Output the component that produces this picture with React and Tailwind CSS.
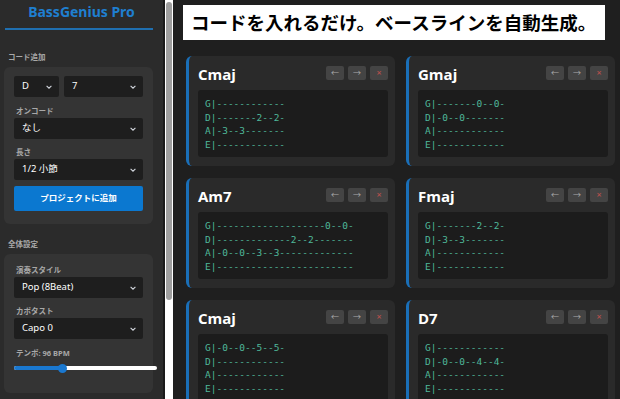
import React from 'react';

const chords = [
  { name: 'Cmaj', tab: ['G|------------', 'D|-------2--2-', 'A|-3--3-------', 'E|------------'] },
  { name: 'Gmaj', tab: ['G|-------0--0-', 'D|-0--0-------', 'A|------------', 'E|------------'] },
  { name: 'Am7', tab: ['G|-------------------0--0-', 'D|-------------2--2-------', 'A|-0--0--3--3-------------', 'E|------------------------'] },
  { name: 'Fmaj', tab: ['G|-------2--2-', 'D|-3--3-------', 'A|------------', 'E|------------'] },
  { name: 'Cmaj', tab: ['G|-0--0--5--5-', 'D|------------', 'A|------------', 'E|------------'] },
  { name: 'D7', tab: ['G|------------', 'D|-0--0--4--4-', 'A|------------', 'E|------------'] },
];

const jp = { fontFamily: '"Noto Sans", "Noto Sans CJK JP", sans-serif' };

function Chevron() {
  return (
    <svg width="8" height="8" viewBox="0 0 10 10" className="text-gray-300">
      <path d="M2 3.5 L5 6.5 L8 3.5" fill="none" stroke="currentColor" strokeWidth="1.4" />
    </svg>
  );
}

function Select({ value, className = '' }) {
  return (
    <div className={`flex items-center justify-between h-[21px] bg-[#1e1e1e] rounded-[2px] pl-2 pr-1.5 text-[9.5px] text-white ${className}`}>
      <span>{value}</span>
      <Chevron />
    </div>
  );
}

function Label({ children, className = '' }) {
  return <div className={`text-[7.5px] leading-[11px] font-bold text-[#a8a8a8] ${className}`}>{children}</div>;
}

function ChordCard({ chord }) {
  return (
    <div className="bg-[#2a2a2a] rounded-md border-l-[3px] border-[#1a6fb8] h-[110px] pl-[9px] pr-[7px] pt-[8px] flex flex-col">
      <div className="flex items-start justify-between">
        <div className="text-white font-bold text-[15px] leading-none mt-[3px]" style={{ fontFamily: '"Open Sans", sans-serif' }}>{chord.name}</div>
        <div className="flex gap-[4px] pt-[2px]">
          <div className="w-[18px] h-[14px] rounded-[2px] bg-[#444444] text-[#aaaaaa] text-[8px] flex items-center justify-center">←</div>
          <div className="w-[18px] h-[14px] rounded-[2px] bg-[#444444] text-[#aaaaaa] text-[8px] flex items-center justify-center">→</div>
          <div className="w-[18px] h-[14px] rounded-[2px] bg-[#444444] text-[#c0504d] text-[9px] flex items-center justify-center">×</div>
        </div>
      </div>
      <div className="mt-[8px] bg-[#1c1c1c] rounded-[3px] h-[67px] pl-[7px] pt-[7px]">
        {chord.tab.map((line, i) => (
          <div key={i} className="text-[9.5px] leading-[13.5px] text-[#4fb89a] whitespace-pre" style={{ fontFamily: '"DejaVu Sans Mono", monospace' }}>{line}</div>
        ))}
      </div>
    </div>
  );
}

export default function App() {
  return (
    <div className="flex h-[399px] w-[620px] overflow-hidden bg-[#1f1f1f]" style={jp}>
      {/* Sidebar */}
      <div className="w-[163px] shrink-0 bg-[#2b2b2b] px-[4px] flex flex-col">
        <div className="text-center text-[#1f7fd0] font-bold text-[14px] pt-[2px] leading-[20px]">BassGenius Pro</div>
        <div className="h-[2px] bg-[#1f6fb0] mt-[6px] mx-[1px] w-[148px]"></div>

        <Label className="mt-[22px] ml-[4px]">コード追加</Label>
        <div className="mt-[4px] w-[149px] bg-[#343434] rounded-md px-[10px] pt-[9px] pb-[13px]">
          <div className="flex gap-[5px]">
            <Select value="D" className="w-[45px]" />
            <Select value="7" className="flex-1" />
          </div>
          <Label className="mt-[9px] ml-[2px] mb-[1px]">オンコード</Label>
          <Select value="なし" />
          <Label className="mt-[8px] ml-[2px] mb-[1px]">長さ</Label>
          <Select value="1/2 小節" />
          <div className="mt-[6px] h-[25px] bg-[#0b78d0] rounded-[2px] flex items-center justify-center text-white font-bold text-[8.5px]">
            プロジェクトに追加
          </div>
        </div>

        <Label className="mt-[15px] ml-[4px]">全体設定</Label>
        <div className="mt-[4px] w-[149px] bg-[#343434] rounded-md pl-[10px] pr-[10px] pt-[11px] pb-[14px] flex-1">
          <Label className="ml-[2px] mb-[1px]">演奏スタイル</Label>
          <Select value="Pop (8Beat)" />
          <Label className="mt-[8px] ml-[2px] mb-[1px]">カポタスト</Label>
          <Select value="Capo 0" />
          <Label className="mt-[9px] ml-[2px]">テンポ: 96 BPM</Label>
          <div className="relative mt-[5px] h-[8px] w-[143px] flex items-center">
            <div className="h-[4px] w-full bg-white rounded-full"></div>
            <div className="absolute left-0 h-[4px] w-[48px] bg-[#1a78d0] rounded-full"></div>
            <div className="absolute left-[44px] w-[9px] h-[9px] rounded-full bg-[#1a78d0]"></div>
          </div>
        </div>
        <div className="h-[6px]"></div>
      </div>

      {/* Scrollbar */}
      <div className="w-[2px] bg-[#1a1a1a] shrink-0"></div>
      <div className="w-[8px] shrink-0 bg-white flex flex-col items-center pt-[2px]">
        <div className="w-[6px] h-[298px] rounded-full bg-[#9e9e9e]"></div>
      </div>

      {/* Main */}
      <div className="flex-1 pl-[10px] pr-[15px] pt-[5px]">
        <div className="bg-white h-[35px] flex items-center pl-[8px]">
          <span className="text-black font-bold text-[18.5px] leading-none" style={{ fontFamily: '"Noto Sans CJK JP", sans-serif' }}>
            コードを入れるだけ。ベースラインを自動生成。
          </span>
        </div>
        <div className="grid grid-cols-2 gap-x-[11px] gap-y-[12px] mt-[16px] -mr-[10px] ml-[3px]">
          {chords.map((c, i) => (
            <ChordCard key={i} chord={c} />
          ))}
        </div>
      </div>
    </div>
  );
}
